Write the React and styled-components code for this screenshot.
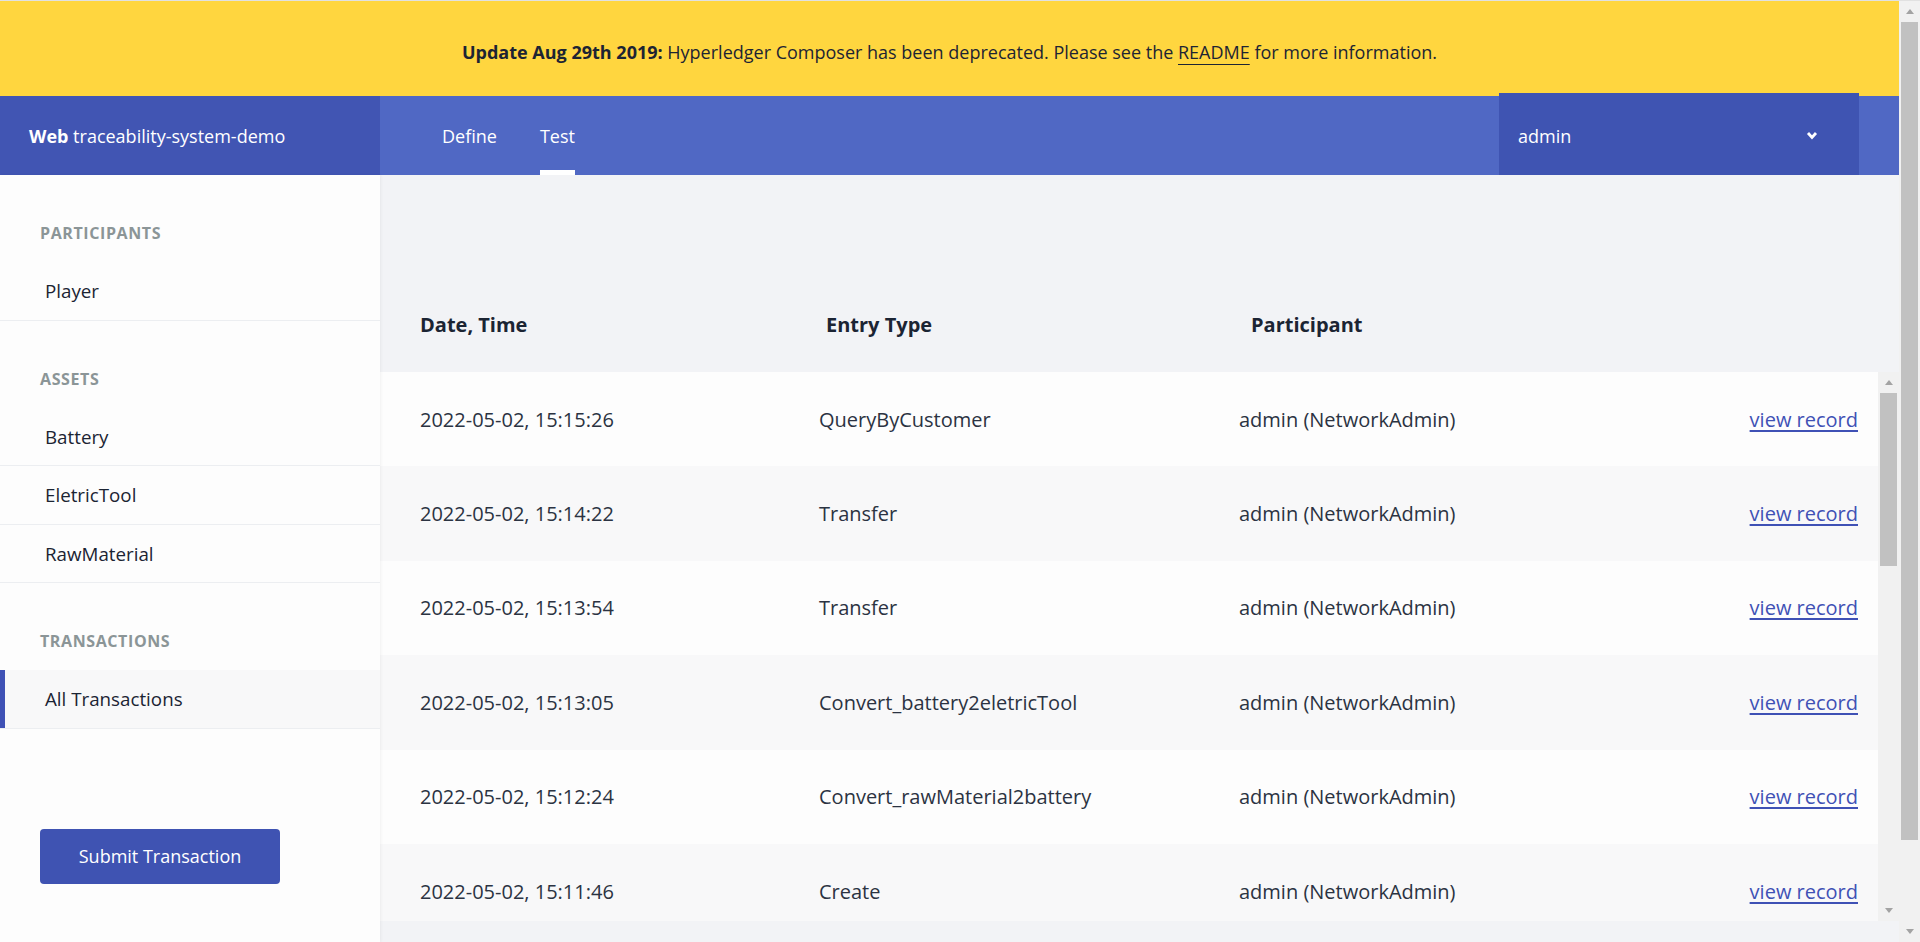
import styled, { createGlobalStyle } from "styled-components";

const GlobalStyle = createGlobalStyle`
  html, body {
    margin: 0;
    padding: 0;
  }
  body {
    font-family: "Open Sans", "Liberation Sans", sans-serif;
    background: #f2f3f6;
    color: #1f2937;
    overflow: hidden;
  }
  * {
    box-sizing: border-box;
  }
`;

const transactions = [
  { date: "2022-05-02, 15:15:26", type: "QueryByCustomer" },
  { date: "2022-05-02, 15:14:22", type: "Transfer" },
  { date: "2022-05-02, 15:13:54", type: "Transfer" },
  { date: "2022-05-02, 15:13:05", type: "Convert_battery2eletricTool" },
  { date: "2022-05-02, 15:12:24", type: "Convert_rawMaterial2battery" },
  { date: "2022-05-02, 15:11:46", type: "Create" },
];

const sections = [
  { title: "PARTICIPANTS", items: ["Player"] },
  { title: "ASSETS", items: ["Battery", "EletricTool", "RawMaterial"] },
  { title: "TRANSACTIONS", items: ["All Transactions"], active: "All Transactions" },
];

// 윈도우 스타일 스크롤바 (헤드리스에서는 안 그려져서 직접 그림)
const ScrollBar = ({ thumb }) => (
  <ScrollTrack>
    <ScrollButton>
      <Arrow $up />
    </ScrollButton>
    <ScrollThumb $height={thumb} />
    <ScrollButton $bottom>
      <Arrow />
    </ScrollButton>
  </ScrollTrack>
);

const App = () => {
  return (
    <>
      <GlobalStyle />
      <Page>
        <Content>
          <Banner>
            <strong>Update Aug 29th 2019:</strong>&nbsp;Hyperledger Composer
            has been deprecated. Please see the&nbsp;
            <BannerLink>README</BannerLink>&nbsp;for more information.
          </Banner>

          <NavBar>
            <Brand>
              <strong>Web</strong> traceability-system-demo
            </Brand>
            <Tabs>
              <Tab>Define</Tab>
              <Tab $active>Test</Tab>
            </Tabs>
            <UserMenu>
              <span>admin</span>
              <svg width="12" height="9" viewBox="0 0 12 9">
                <polyline
                  points="2,2 6,6.5 10,2"
                  fill="none"
                  stroke="#fff"
                  strokeWidth="2.8"
                />
              </svg>
            </UserMenu>
          </NavBar>

          <Layout>
            <Sidebar>
              {sections.map((section) => (
                <Section key={section.title}>
                  <SectionTitle>{section.title}</SectionTitle>
                  {section.items.map((item) => (
                    <NavItem key={item} $active={item === section.active}>
                      {item}
                    </NavItem>
                  ))}
                </Section>
              ))}
              <SubmitButton>Submit Transaction</SubmitButton>
            </Sidebar>

            <Main>
              <HeaderRow>
                <div>Date, Time</div>
                <div>Entry Type</div>
                <div>Participant</div>
              </HeaderRow>
              <TableBody>
                <RowList>
                  {transactions.map((tx, i) => (
                    <Row key={i} $odd={i % 2 === 1}>
                      <div>{tx.date}</div>
                      <div>{tx.type}</div>
                      <div>admin (NetworkAdmin)</div>
                      <ViewLink>view record</ViewLink>
                    </Row>
                  ))}
                </RowList>
                <ScrollBar thumb={173} />
              </TableBody>
            </Main>
          </Layout>
        </Content>
        <ScrollBar thumb={818} />
      </Page>
    </>
  );
};

const Page = styled.div`
  height: 100vh;
  display: flex;
  border-top: 1px solid #e1e1e1;
`;

const Content = styled.div`
  flex: 1;
  min-width: 0;
  display: flex;
  flex-direction: column;
`;

const ScrollTrack = styled.div`
  width: 21px;
  flex-shrink: 0;
  background: #f1f1f1;
  display: flex;
  flex-direction: column;
  align-items: center;
`;

const ScrollButton = styled.div`
  height: 21px;
  width: 100%;
  flex-shrink: 0;
  display: flex;
  align-items: center;
  justify-content: center;
  margin-top: ${(p) => (p.$bottom ? "auto" : "0")};
`;

const Arrow = styled.div`
  width: 0;
  height: 0;
  border-left: 4.5px solid transparent;
  border-right: 4.5px solid transparent;
  ${(p) =>
    p.$up
      ? "border-bottom: 5px solid #a3a3a3;"
      : "border-top: 5px solid #a3a3a3;"}
`;

const ScrollThumb = styled.div`
  width: 17px;
  height: ${(p) => p.$height}px;
  background: #c1c1c1;
`;

const Banner = styled.div`
  height: 95px;
  flex-shrink: 0;
  background: #ffd63f;
  display: flex;
  align-items: center;
  justify-content: center;
  padding-top: 6px;
  font-size: 18px;
  color: #1d2433;

  strong {
    font-weight: 700;
  }
`;

const BannerLink = styled.span`
  text-decoration: underline;
  text-underline-offset: 5px;
  text-decoration-thickness: 1px;
`;

const NavBar = styled.div`
  height: 79px;
  flex-shrink: 0;
  display: flex;
  background: #5068c4;
  color: #fff;
`;

const Brand = styled.div`
  width: 380px;
  background: #4155b3;
  display: flex;
  align-items: center;
  padding-left: 29px;
  font-size: 18px;
  white-space: pre;

  strong {
    font-weight: 700;
  }
`;

const Tabs = styled.div`
  display: flex;
  gap: 43px;
  padding-left: 62px;
  flex: 1;
`;

const Tab = styled.div`
  display: flex;
  align-items: center;
  font-size: 18px;
  box-shadow: ${(p) => (p.$active ? "inset 0 -5px 0 #fff" : "none")};
`;

const UserMenu = styled.div`
  width: 360px;
  margin: -3px 40px 0 0;
  background: #3f54b2;
  display: flex;
  align-items: center;
  justify-content: space-between;
  padding: 3px 41px 0 19px;
  font-size: 18px;
`;

const Layout = styled.div`
  flex: 1;
  min-height: 0;
  display: flex;
`;

const Sidebar = styled.div`
  width: 380px;
  flex-shrink: 0;
  background: #fdfdfd;
  box-shadow: 1px 0 3px rgba(0, 0, 0, 0.05);
  position: relative;
  z-index: 1;
`;

const Section = styled.div`
  padding-top: 47px;
`;

const SectionTitle = styled.div`
  padding-left: 40px;
  height: 22px;
  line-height: 22px;
  margin-bottom: 18px;
  font-size: 16px;
  font-weight: 700;
  letter-spacing: 0.6px;
  color: #8b9597;
`;

const NavItem = styled.div`
  height: 58.5px;
  display: flex;
  align-items: center;
  padding-left: 45px;
  font-size: 18.75px;
  color: #1b2433;
  border-bottom: 1px solid #eceef1;
  background: ${(p) => (p.$active ? "#f8f8f9" : "transparent")};
  box-shadow: ${(p) => (p.$active ? "inset 5px 0 0 #3f51b5" : "none")};
`;

const SubmitButton = styled.button`
  display: block;
  margin: 100px 0 0 40px;
  width: 240px;
  height: 55px;
  border: none;
  border-radius: 4px;
  background: #3f53b2;
  color: #fff;
  font-family: inherit;
  font-size: 18px;
`;

const Main = styled.div`
  flex: 1;
  min-width: 0;
  padding-top: 101px;
`;

const HeaderRow = styled.div`
  height: 96px;
  display: grid;
  grid-template-columns: 406px 425px 1fr;
  align-items: center;
  padding-left: 40px;
  font-size: 20px;
  font-weight: 700;
  color: #1b2433;
`;

const TableBody = styled.div`
  height: 549px;
  display: flex;
`;

const RowList = styled.div`
  flex: 1;
  min-width: 0;
  overflow: hidden;
`;

const Row = styled.div`
  height: 94.4px;
  display: grid;
  grid-template-columns: 399px 420px 1fr auto;
  align-items: center;
  padding: 0 20px 0 40px;
  font-size: 20px;
  color: #2b3342;
  background: ${(p) => (p.$odd ? "#f8f8f9" : "#fdfdfd")};
`;

const ViewLink = styled.a`
  color: #3f51b5;
  text-decoration: underline;
  text-decoration-thickness: 1.6px;
  text-underline-offset: 3px;
  cursor: pointer;
`;

export default App;
